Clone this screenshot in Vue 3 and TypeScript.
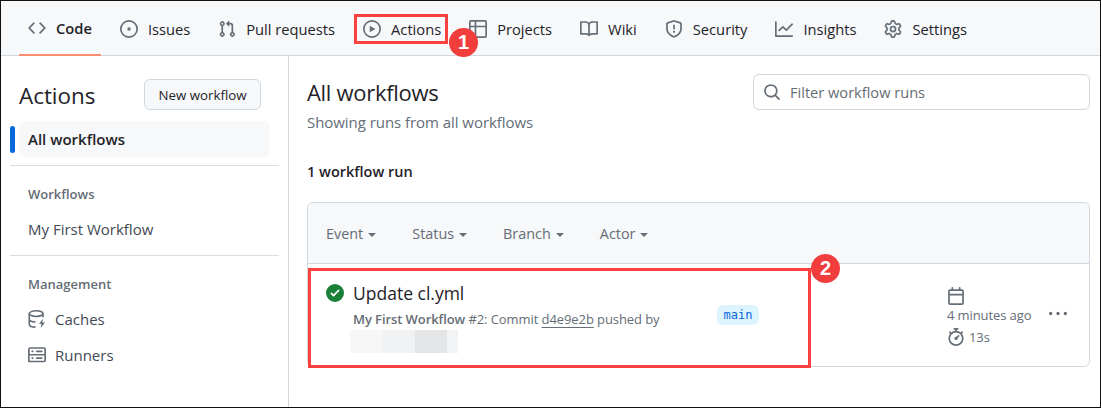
<script setup lang="ts">
interface Tab {
  label: string
  icon: string
}

const icons = {
  code: 'M11.28 3.22l4.25 4.25a.75.75 0 010 1.06l-4.25 4.25a.749.749 0 01-1.275-.326.749.749 0 01.215-.734L13.94 8l-3.72-3.72a.749.749 0 01.326-1.275.749.749 0 01.734.215Zm-6.56 0a.751.751 0 011.042.018.751.751 0 01.018 1.042L2.06 8l3.72 3.72a.749.749 0 01-.326 1.275.749.749 0 01-.734-.215L.47 8.53a.75.75 0 010-1.06Z',
  issue: 'M8 9.5a1.5 1.5 0 100-3 1.5 1.5 0 000 3Z M8 0a8 8 0 110 16A8 8 0 018 0ZM1.5 8a6.5 6.5 0 1013 0 6.5 6.5 0 00-13 0Z',
  pull: 'M1.5 3.25a2.25 2.25 0 113 2.122v5.256a2.251 2.251 0 11-1.5 0V5.372A2.25 2.25 0 011.5 3.25Zm5.677-.177L9.573.677A.25.25 0 0110 .854V2.5h1A2.5 2.5 0 0113.5 5v5.628a2.251 2.251 0 11-1.5 0V5a1 1 0 00-1-1h-1v1.646a.25.25 0 01-.427.177L7.177 3.427a.25.25 0 010-.354ZM3.75 2.5a.75.75 0 100 1.5.75.75 0 000-1.5Zm0 9.5a.75.75 0 100 1.5.75.75 0 000-1.5Zm8.25.75a.75.75 0 101.5 0 .75.75 0 00-1.5 0Z',
  play: 'M8 0a8 8 0 110 16A8 8 0 018 0ZM1.5 8a6.5 6.5 0 1013 0 6.5 6.5 0 00-13 0Zm4.879-2.773l4.264 2.559a.25.25 0 010 .428l-4.264 2.559A.25.25 0 016 10.559V5.442a.25.25 0 01.379-.215Z',
  table: 'M0 1.75C0 .784.784 0 1.75 0h12.5C15.216 0 16 .784 16 1.75v12.5A1.75 1.75 0 0114.25 16H1.75A1.75 1.75 0 010 14.25ZM6.5 6.5v8h7.75a.25.25 0 00.25-.25V6.5Zm8-1.5V1.75a.25.25 0 00-.25-.25H6.5V5Zm-13 1.5v7.75c0 .138.112.25.25.25H5v-8ZM5 5V1.5H1.75a.25.25 0 00-.25.25V5Z',
  book: 'M0 1.75A.75.75 0 01.75 1h4.253c1.227 0 2.317.59 3 1.501A3.743 3.743 0 0111.006 1h4.245a.75.75 0 01.75.75v10.5a.75.75 0 01-.75.75h-4.507a2.25 2.25 0 00-1.591.659l-.622.621a.75.75 0 01-1.06 0l-.622-.621A2.25 2.25 0 005.258 13H.75a.75.75 0 01-.75-.75Zm7.251 10.324l.004-5.073-.002-2.253A2.25 2.25 0 005.003 2.5H1.5v9h3.757a3.75 3.75 0 011.994.574ZM8.755 4.75l-.004 7.322a3.752 3.752 0 011.992-.572H14.5v-9h-3.495a2.25 2.25 0 00-2.25 2.25Z',
  shield: 'M7.467.133a1.748 1.748 0 011.066 0l5.25 1.68A1.75 1.75 0 0115 3.48V7c0 1.566-.32 3.182-1.303 4.682-.983 1.498-2.585 2.813-5.032 3.855a1.697 1.697 0 01-1.33 0c-2.447-1.042-4.049-2.357-5.032-3.855C1.32 10.182 1 8.566 1 7V3.48a1.75 1.75 0 011.217-1.667Zm.61 1.429a.25.25 0 00-.153 0l-5.25 1.68a.25.25 0 00-.174.238V7c0 1.358.275 2.666 1.057 3.86.784 1.194 2.121 2.34 4.366 3.297a.196.196 0 00.154 0c2.245-.956 3.582-2.104 4.366-3.298C13.225 9.666 13.5 8.36 13.5 7V3.48a.251.251 0 00-.174-.237l-5.25-1.68ZM8.75 4.75v3a.75.75 0 01-1.5 0v-3a.75.75 0 011.5 0ZM9 10.5a1 1 0 11-2 0 1 1 0 012 0Z',
  graph: 'M1.5 1.75V13.5h13.75a.75.75 0 010 1.5H.75a.75.75 0 01-.75-.75V1.75a.75.75 0 011.5 0Zm14.28 2.53l-5.25 5.25a.75.75 0 01-1.06 0L7 7.06 4.28 9.78a.751.751 0 01-1.042-.018.751.751 0 01-.018-1.042l3.25-3.25a.75.75 0 011.06 0L10 7.94l4.72-4.72a.751.751 0 011.042.018.751.751 0 01.018 1.042Z',
  gear: 'M8 0a8.2 8.2 0 01.701.031C9.444.095 9.99.645 10.16 1.29l.288 1.107c.018.066.079.158.212.224.231.114.454.243.668.386.123.082.233.09.299.071l1.103-.303c.644-.176 1.392.021 1.82.63.27.385.506.792.704 1.218.315.675.111 1.422-.364 1.891l-.814.806c-.049.048-.098.147-.088.294.016.257.016.515 0 .772-.01.147.038.246.088.294l.814.806c.475.469.679 1.216.364 1.891a7.977 7.977 0 01-.704 1.217c-.428.61-1.176.807-1.82.63l-1.102-.302c-.067-.019-.177-.011-.3.071a5.909 5.909 0 01-.668.386c-.133.066-.194.158-.211.224l-.29 1.106c-.168.646-.715 1.196-1.458 1.26a8.006 8.006 0 01-1.402 0c-.743-.064-1.289-.614-1.458-1.26l-.289-1.106c-.018-.066-.079-.158-.212-.224a5.738 5.738 0 01-.668-.386c-.123-.082-.233-.09-.299-.071l-1.103.303c-.644.176-1.392-.021-1.82-.63a8.12 8.12 0 01-.704-1.218c-.315-.675-.111-1.422.363-1.891l.815-.806c.05-.048.098-.147.088-.294a6.214 6.214 0 010-.772c.01-.147-.038-.246-.088-.294l-.815-.806C.635 6.045.431 5.298.746 4.623a7.92 7.92 0 01.704-1.217c.428-.61 1.176-.807 1.82-.63l1.102.302c.067.019.177.011.3-.071.214-.143.437-.272.668-.386.133-.066.194-.158.211-.224l.29-1.106C6.009.645 6.556.095 7.299.03 7.53.01 7.764 0 8 0Zm-.571 1.525c-.036.003-.108.036-.137.146l-.289 1.105c-.147.561-.549.967-.998 1.189-.173.086-.34.183-.5.29-.417.278-.97.423-1.529.27l-1.103-.303c-.109-.03-.175.016-.195.045-.22.312-.412.644-.573.99-.014.031-.021.11.059.19l.815.806c.411.406.562.957.53 1.456a4.709 4.709 0 000 .582c.032.499-.119 1.05-.53 1.456l-.815.806c-.081.08-.073.159-.059.19.162.346.353.677.573.989.02.03.085.076.195.046l1.102-.303c.56-.153 1.113-.008 1.53.27.161.107.328.204.501.29.447.222.85.629.997 1.189l.289 1.105c.029.109.101.143.137.146a6.6 6.6 0 001.142 0c.036-.003.108-.036.137-.146l.289-1.105c.147-.561.549-.967.998-1.189.173-.086.34-.183.5-.29.417-.278.97-.423 1.529-.27l1.103.303c.109.029.175-.016.195-.045.22-.313.411-.644.573-.99.014-.031.021-.11-.059-.19l-.815-.806c-.411-.406-.562-.957-.53-1.456a4.709 4.709 0 000-.582c-.032-.499.119-1.05.53-1.456l.815-.806c.081-.08.073-.159.059-.19a6.464 6.464 0 00-.573-.989c-.02-.03-.085-.076-.195-.046l-1.102.303c-.56.153-1.113.008-1.53-.27a4.44 4.44 0 00-.501-.29c-.447-.222-.85-.629-.997-1.189l-.289-1.105c-.029-.11-.101-.143-.137-.146a6.6 6.6 0 00-1.142 0ZM11 8a3 3 0 11-6 0 3 3 0 016 0ZM9.5 8a1.5 1.5 0 10-3.001.001A1.5 1.5 0 009.5 8Z',
  search: 'M10.68 11.74a6 6 0 01-7.922-8.982 6 6 0 018.982 7.922l3.04 3.04a.749.749 0 01-.326 1.275.749.749 0 01-.734-.215ZM11.5 7a4.499 4.499 0 10-8.997 0A4.499 4.499 0 0011.5 7Z',
  check: 'M8 16A8 8 0 118 0a8 8 0 010 16Zm3.78-9.72a.751.751 0 00-.018-1.042.751.751 0 00-1.042-.018L6.75 9.19 5.28 7.72a.751.751 0 00-1.042.018.751.751 0 00-.018 1.042l2 2a.75.75 0 001.06 0Z',
  calendar: 'M4.75 0a.75.75 0 01.75.75V2h5V.75a.75.75 0 011.5 0V2h1.25c.966 0 1.75.784 1.75 1.75v10.5A1.75 1.75 0 0113.25 16H2.75A1.75 1.75 0 011 14.25V3.75C1 2.784 1.784 2 2.75 2H4V.75A.75.75 0 014.75 0ZM2.5 7.5v6.75c0 .138.112.25.25.25h10.5a.25.25 0 00.25-.25V7.5Zm10.75-4H2.75a.25.25 0 00-.25.25V6h11V3.75a.25.25 0 00-.25-.25Z',
  stopwatch: 'M5.75.75A.75.75 0 016.5 0h3a.75.75 0 010 1.5h-.75v1l-.001.041a6.724 6.724 0 013.464 1.435l.007-.006.75-.75a.75.75 0 111.06 1.06l-.75.75-.006.007a6.75 6.75 0 11-10.548 0L2.72 5.03l-.75-.75a.751.751 0 01.018-1.042.751.751 0 011.042-.018l.75.75.007.006A6.72 6.72 0 017.25 2.541V1.5H6.5a.75.75 0 01-.75-.75ZM8 14.5a5.25 5.25 0 100-10.5 5.25 5.25 0 000 10.5Zm.389-6.7l1.33-1.33a.75.75 0 111.061 1.06L9.45 8.861A1.503 1.503 0 018 10.75a1.499 1.499 0 11.389-2.95Z',
  kebab: 'M8 9a1.5 1.5 0 100-3 1.5 1.5 0 000 3ZM1.5 9a1.5 1.5 0 100-3 1.5 1.5 0 000 3Zm13 0a1.5 1.5 0 100-3 1.5 1.5 0 000 3Z',
  server: 'M1.75 1h12.5c.966 0 1.75.784 1.75 1.75v4c0 .372-.116.717-.314 1 .198.283.314.628.314 1v4a1.75 1.75 0 01-1.75 1.75H1.75A1.75 1.75 0 010 13.75v-4c0-.372.116-.717.314-1a1.739 1.739 0 01-.314-1v-4C0 1.784.784 1 1.75 1ZM1.5 2.75v4c0 .138.112.25.25.25h12.5a.25.25 0 00.25-.25v-4a.25.25 0 00-.25-.25H1.75a.25.25 0 00-.25.25Zm.25 5.75a.25.25 0 00-.25.25v4c0 .138.112.25.25.25h12.5a.25.25 0 00.25-.25v-4a.25.25 0 00-.25-.25ZM7 4.75A.75.75 0 017.75 4h4.5a.75.75 0 010 1.5h-4.5A.75.75 0 017 4.75ZM7.75 10h4.5a.75.75 0 010 1.5h-4.5a.75.75 0 010-1.5ZM3 4.75A.75.75 0 013.75 4h.5a.75.75 0 010 1.5h-.5A.75.75 0 013 4.75ZM3.75 10h.5a.75.75 0 010 1.5h-.5a.75.75 0 010-1.5Z',
}

const tabs: Tab[] = [
  { label: 'Code', icon: icons.code },
  { label: 'Issues', icon: icons.issue },
  { label: 'Pull requests', icon: icons.pull },
  { label: 'Actions', icon: icons.play },
  { label: 'Projects', icon: icons.table },
  { label: 'Wiki', icon: icons.book },
  { label: 'Security', icon: icons.shield },
  { label: 'Insights', icon: icons.graph },
  { label: 'Settings', icon: icons.gear },
]

const filters = ['Event', 'Status', 'Branch', 'Actor']
</script>

<template>
  <div class="frame">
    <nav class="tabs">
      <a
        v-for="(tab, i) in tabs"
        :key="tab.label"
        class="tab"
        :class="{ current: i === 0 }"
      >
        <svg class="icon" viewBox="0 0 16 16"><path :d="tab.icon" /></svg>
        <span>{{ tab.label }}</span>
      </a>
    </nav>

    <div class="body">
      <aside class="side">
        <div class="side-head">
          <h2>Actions</h2>
          <button class="new-btn">New workflow</button>
        </div>
        <div class="side-item active">All workflows</div>
        <hr />
        <h3>Workflows</h3>
        <div class="side-item">My First Workflow</div>
        <hr />
        <h3>Management</h3>
        <div class="side-item">
          <svg class="icon cache" viewBox="0 0 16 16">
            <ellipse cx="7.2" cy="3.2" rx="6.1" ry="2.5" stroke="currentColor" stroke-width="1.4" />
            <path d="M1.1 3.2v9.4c0 1.4 2.4 2.5 5.6 2.6M13.3 3.2v3.2M1.1 8c0 1.4 2.5 2.5 5.6 2.6" stroke="currentColor" stroke-width="1.4" />
            <path d="M13.4 7.8l-3.6 4.4h2.2l-.7 3.8 3.8-4.8h-2.3z" fill="currentColor" />
          </svg>
          <span>Caches</span>
        </div>
        <div class="side-item">
          <svg class="icon" viewBox="0 0 16 16"><path :d="icons.server" /></svg>
          <span>Runners</span>
        </div>
      </aside>

      <main class="main">
        <div class="main-head">
          <div>
            <h1>All workflows</h1>
            <p class="sub">Showing runs from all workflows</p>
          </div>
          <label class="search">
            <svg class="icon" viewBox="0 0 16 16"><path :d="icons.search" /></svg>
            <span>Filter workflow runs</span>
          </label>
        </div>
        <div class="count">1 workflow run</div>

        <section class="runs">
          <header class="runs-head">
            <span v-for="f in filters" :key="f" class="filter">{{ f }}<i class="caret"></i></span>
          </header>
          <div class="run">
            <svg class="status" viewBox="0 0 16 16"><path :d="icons.check" /></svg>
            <div class="run-info">
              <div class="run-title">Update cl.yml</div>
              <div class="run-meta">
                <b>My First Workflow</b> #2: Commit <u>d4e9e2b</u> pushed by
              </div>
              <div class="blur">
                <i class="b1"></i><i class="b2"></i><i class="b3"></i><i class="b4"></i>
              </div>
            </div>
            <span class="branch">main</span>
            <div class="when">
              <svg class="icon" viewBox="0 0 16 16"><path :d="icons.calendar" /></svg>
              <div>4 minutes ago</div>
              <div class="dur">
                <svg class="icon" viewBox="0 0 16 16"><path :d="icons.stopwatch" /></svg>
                <span>13s</span>
              </div>
            </div>
            <svg class="kebab" viewBox="0 0 16 16"><path :d="icons.kebab" /></svg>
          </div>
        </section>
      </main>
    </div>

    <!-- callouts drawn over the screenshot -->
    <div class="mark m1"></div>
    <div class="pin p1">1</div>
    <div class="mark m2"></div>
    <div class="pin p2">2</div>
  </div>
</template>

<style scoped>
.frame {
  position: relative;
  width: 1101px;
  height: 408px;
  box-sizing: border-box;
  border: 1px solid #111;
  overflow: hidden;
  background: #fff;
  color: #1f2328;
  font-family: 'Open Sans', 'Liberation Sans', sans-serif;
  font-size: 14px;
}
.icon {
  width: 16px;
  height: 16px;
  fill: currentColor;
  flex: none;
}
.icon.cache {
  fill: none;
}
.tabs {
  display: flex;
  height: 55px;
  box-sizing: border-box;
  padding-left: 18px;
  gap: 10px;
  background: #f6f8fa;
  border-bottom: 1px solid #d0d7de;
}
.tab {
  display: flex;
  align-items: center;
  gap: 10px;
  height: 55px;
  box-sizing: border-box;
  padding: 0 9px;
  font-size: 14.7px;
}
.tab .icon {
  color: #656d76;
  width: 18px;
  height: 18px;
}
.tab.current {
  font-weight: 600;
  border-bottom: 2px solid #fd8c73;
}
.body {
  display: flex;
  height: 351px;
}
.side {
  width: 288px;
  box-sizing: border-box;
  border-right: 1px solid #d0d7de;
  padding: 23px 9px 0 9px;
}
.side-head {
  display: flex;
  align-items: center;
  justify-content: space-between;
  padding: 0 18px 0 9px;
  margin-bottom: 11px;
}
h2 {
  margin: 0;
  padding-top: 2px;
  font-size: 22.4px;
  line-height: 27px;
  font-weight: 400;
}
.new-btn {
  width: 117px;
  height: 31px;
  border: 1px solid #d0d7de;
  border-radius: 6px;
  background: #f6f8fa;
  color: #1f2328;
  font: 500 13.3px 'Open Sans', sans-serif;
  padding: 0;
}
.side-item {
  position: relative;
  display: flex;
  align-items: center;
  gap: 9px;
  height: 36px;
  padding-left: 18px;
  color: #424a53;
  font-size: 15px;
}
.side-item .icon {
  color: #656d76;
  width: 18px;
  height: 18px;
}
.side-item.active {
  margin: 0 9px;
  padding-left: 9px;
  background: #f6f8fa;
  border-radius: 6px;
  font-weight: 600;
  color: #1f2328;
}
.side-item.active::before {
  content: '';
  position: absolute;
  left: -9px;
  top: 5px;
  width: 5px;
  height: 27px;
  border-radius: 3px;
  background: #0969da;
}
hr {
  margin: 8px 0 0;
  border: 0;
  border-top: 1px solid #d8dee4;
}
h3 {
  margin: 0;
  padding: 19px 0 8px 18px;
  font-size: 13px;
  line-height: 18px;
  font-weight: 600;
  color: #656d76;
}
.main {
  flex: 1;
  padding: 18px 10px 0 18px;
}
.main-head {
  display: flex;
  justify-content: space-between;
  align-items: flex-start;
}
h1 {
  margin: 0;
  font-size: 22px;
  line-height: 36px;
  font-weight: 400;
  letter-spacing: -0.3px;
}
.sub {
  margin: 2px 0 0;
  color: #656d76;
  font-size: 15px;
  letter-spacing: -0.05px;
}
.search {
  display: flex;
  align-items: center;
  gap: 9px;
  width: 337px;
  height: 36px;
  box-sizing: border-box;
  padding-left: 9px;
  border: 1px solid #d0d7de;
  border-radius: 6px;
  color: #656d76;
  font-size: 14.6px;
}
.search .icon {
  width: 18px;
  height: 18px;
}
.count {
  margin-top: 30px;
  font-size: 14.5px;
  font-weight: 600;
}
.runs {
  margin-top: 21px;
  border: 1px solid #d0d7de;
  border-radius: 6px;
  height: 165px;
  box-sizing: border-box;
}
.runs-head {
  display: flex;
  align-items: center;
  height: 60px;
  padding-left: 18px;
  gap: 36px;
  background: #f6f8fa;
  border-bottom: 1px solid #d0d7de;
  border-radius: 6px 6px 0 0;
  color: #656d76;
  font-size: 14.4px;
}
.caret {
  display: inline-block;
  margin-left: 5px;
  vertical-align: 2px;
  border: 4px solid transparent;
  border-top-color: currentColor;
  border-bottom: 0;
}
.run {
  position: relative;
  display: flex;
  padding: 20px 0 0 18px;
}
.status {
  width: 18px;
  height: 18px;
  fill: #1a7f37;
  flex: none;
}
.run-info {
  width: 340px;
  margin-left: 9px;
}
.run-title {
  margin-top: -1px;
  font-size: 17.5px;
  line-height: 20px;
  font-weight: 500;
}
.run-meta {
  margin-top: 7px;
  font-size: 13px;
  line-height: 18px;
  color: #656d76;
  white-space: nowrap;
  letter-spacing: -0.08px;
}
.run-meta b {
  font-weight: 600;
}
.run-meta u {
  text-underline-offset: 3px;
}
.blur {
  display: flex;
  margin: 2px 0 0 -3px;
  height: 23px;
}
.blur i {
  display: block;
  height: 100%;
}
.b1 { width: 32px; background: #f7f7f8; }
.b2 { width: 33px; background: #f1f2f3; }
.b3 { width: 32px; background: #e4e5e7; }
.b4 { width: 11px; background: #f2f3f4; }
.branch {
  position: absolute;
  left: 409px;
  top: 41px;
  height: 20px;
  padding: 0 6.5px;
  line-height: 20px;
  border-radius: 6px;
  background: #ddf4ff;
  color: #0969da;
  font-family: 'DejaVu Sans Mono', 'Liberation Mono', monospace;
  font-size: 12px;
}
.when {
  position: absolute;
  left: 639px;
  top: 23px;
  font-size: 13px;
  line-height: 20px;
  color: #656d76;
  letter-spacing: -0.1px;
}
.when .icon {
  display: block;
  width: 18px;
  height: 18px;
}
.dur {
  display: flex;
  align-items: center;
  gap: 4px;
  margin-top: 2px;
}
.kebab {
  position: absolute;
  left: 741px;
  top: 41px;
  width: 18px;
  height: 18px;
  fill: #656d76;
}
.mark {
  position: absolute;
  box-sizing: border-box;
  border: 3px solid #fb4040;
}
.m1 {
  left: 353px;
  top: 13px;
  width: 94px;
  height: 30px;
}
.m2 {
  left: 307px;
  top: 267px;
  width: 503px;
  height: 100px;
}
.pin {
  position: absolute;
  width: 29px;
  height: 29px;
  border-radius: 50%;
  background: #f23d3d;
  color: #fff;
  font: 700 20px/29px 'Liberation Sans', sans-serif;
  text-align: center;
}
.p1 {
  left: 448px;
  top: 27px;
}
.p2 {
  left: 810px;
  top: 253px;
}
</style>
